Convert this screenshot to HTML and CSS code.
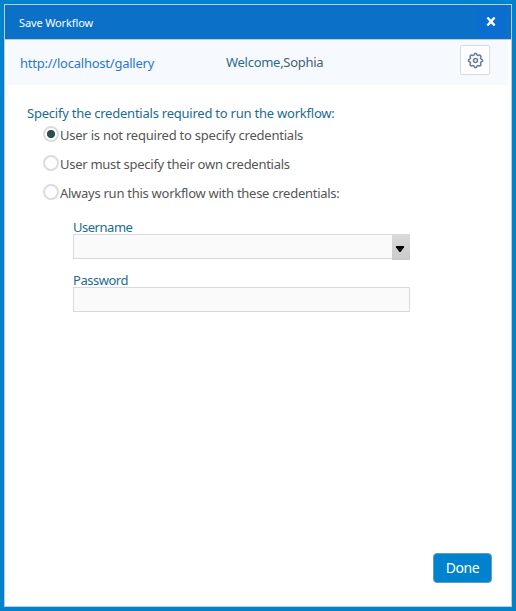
FILE: index.html
```html
<!DOCTYPE html>
<html lang="en">
<head>
<meta charset="utf-8">
<title>Save Workflow</title>
<link rel="stylesheet" href="styles.css">
</head>
<body>
<main class="dialog">
  <header class="titlebar">
    <h1 class="title">Save Workflow</h1>
    <button class="close" aria-label="Close"><svg width="10" height="9" viewBox="0 0 10 9"><path d="M1.4.5 8.6 8.5M8.6.5 1.4 8.5"/></svg></button>
  </header>
  <div class="account">
    <a class="url">http://localhost/gallery</a>
    <span class="welcome">Welcome,<span class="user">Sophia</span></span>
    <button class="settings" aria-label="Settings">
      <svg width="19" height="19" viewBox="0 0 24 24"><path d="M10.325 4.317c.426-1.756 2.924-1.756 3.35 0a1.724 1.724 0 0 0 2.573 1.066c1.543-.94 3.31.826 2.37 2.37a1.724 1.724 0 0 0 1.065 2.572c1.756.426 1.756 2.924 0 3.35a1.724 1.724 0 0 0-1.066 2.573c.94 1.543-.826 3.31-2.37 2.37a1.724 1.724 0 0 0-2.572 1.065c-.426 1.756-2.924 1.756-3.35 0a1.724 1.724 0 0 0-2.573-1.066c-1.543.94-3.31-.826-2.37-2.37a1.724 1.724 0 0 0-1.065-2.572c-1.756-.426-1.756-2.924 0-3.35a1.724 1.724 0 0 0 1.066-2.573c-.94-1.543.826-3.31 2.37-2.37 1 .608 2.296.07 2.572-1.065z"/><circle cx="12" cy="12" r="2.5"/></svg>
    </button>
  </div>
  <section class="content">
    <p class="prompt">Specify the credentials required to run the workflow:</p>
    <div class="options">
      <label class="option"><i class="radio checked"></i><span>User is not required to specify credentials</span></label>
      <label class="option"><i class="radio"></i><span class="tight">User must specify their own credentials</span></label>
      <label class="option"><i class="radio"></i><span class="tight">Always run this workflow with these credentials:</span></label>
    </div>
    <div class="fields">
      <div class="field"><span class="name">Username</span><div class="input"><span class="arrow"><svg width="8" height="6" viewBox="0 0 8 6"><path d="M0 0h8v1.2L4.6 6H3.4L0 1.2z"/></svg></span></div></div>
      <div class="field"><span class="name">Password</span><div class="input"></div></div>
    </div>
  </section>
  <footer class="footer"><button class="done">Done</button></footer>
</main>
</body>
</html>
```
FILE: styles.css
```css
* { box-sizing: border-box; }
body {
  margin: 0;
  height: 611px;
  padding: 4px;
  background: #0082cd;
  font: 13px/18px "Noto Sans", "Open Sans", sans-serif;
  letter-spacing: -0.23px;
  color: #555;
  overflow: hidden;
}
button { font: inherit; letter-spacing: inherit; padding: 0; margin: 0; border: 0; }
.dialog {
  width: 508px;
  height: 603px;
  display: flex;
  flex-direction: column;
  background: #fff;
  border: 1px solid #bfc9df;
}
.titlebar {
  height: 35px;
  flex: none;
  display: flex;
  align-items: center;
  justify-content: space-between;
  padding: 0 5px 0 14px;
  background: #0b70c7;
  border-bottom: 1px solid #c3c7d0;
}
.title {
  margin: 2px 0 0;
  font-size: 11px;
  font-weight: 400;
  letter-spacing: -0.13px;
  color: #fff;
  white-space: nowrap;
}
.close {
  width: 28px;
  height: 28px;
  display: grid;
  place-items: center;
  padding: 0 3px 1px 0;
  background: #0c6dd0;
}
.close path { stroke: #fff; stroke-width: 2.4; }
.account {
  height: 45px;
  flex: none;
  margin: 0 3px;
  padding: 0 18px 0 12px;
  display: grid;
  grid-template-columns: 206px 1fr 30px;
  align-items: center;
  background: #f6faff;
}
.url { color: #2b78cb; white-space: nowrap; }
.welcome { margin-top: -2px; color: #2b6a8c; letter-spacing: -0.28px; white-space: nowrap; }
.user { color: #46606e; }
.settings {
  width: 30px;
  height: 30px;
  margin-top: -5px;
  display: grid;
  place-items: center;
  background: #fff;
  border: 1px solid #d3dae8;
  border-radius: 2px;
}
.settings path, .settings circle { fill: none; stroke: #6b7c9c; stroke-width: 2; }
.content { flex: 1; padding: 19px 22px 0; }
.prompt { margin: 0; color: #1a6d8f; white-space: nowrap; }
.options { padding-left: 16px; }
.option { height: 29px; display: flex; white-space: nowrap; }
.option:first-child { margin-top: 4px; }
.option span { margin-left: 1px; }
.option .tight { letter-spacing: -0.27px; }
.radio {
  width: 16px;
  height: 16px;
  flex: none;
  border: 2px solid #dcdcdc;
  border-radius: 50%;
  background: #fff;
}
.radio.checked { background: radial-gradient(circle, #2f4f4f 3.7px, #fff 4.5px); }
.fields { width: 337px; margin: 5px 0 0 46px; }
.field { margin-bottom: 12px; }
.name { display: block; height: 16px; color: #1a6d8f; letter-spacing: -0.48px; }
.input {
  height: 25px;
  display: flex;
  justify-content: flex-end;
  background: #fafafa;
  border: 1px solid #d9d9d9;
}
.arrow {
  width: 18px;
  height: 26px;
  margin: -1px -1px 0 0;
  display: grid;
  place-items: center;
  padding: 3px 2px 0 0;
  background: linear-gradient(#dadada, #cacaca);
}
.footer { display: flex; justify-content: flex-end; padding: 0 19px 23px 0; }
.done {
  width: 59px;
  height: 30px;
  color: #fff;
  background: #0082cd;
  border: 1px solid #5f9bcd;
  border-radius: 4px;
  font-size: 14px;
  letter-spacing: -0.4px;
}
```
